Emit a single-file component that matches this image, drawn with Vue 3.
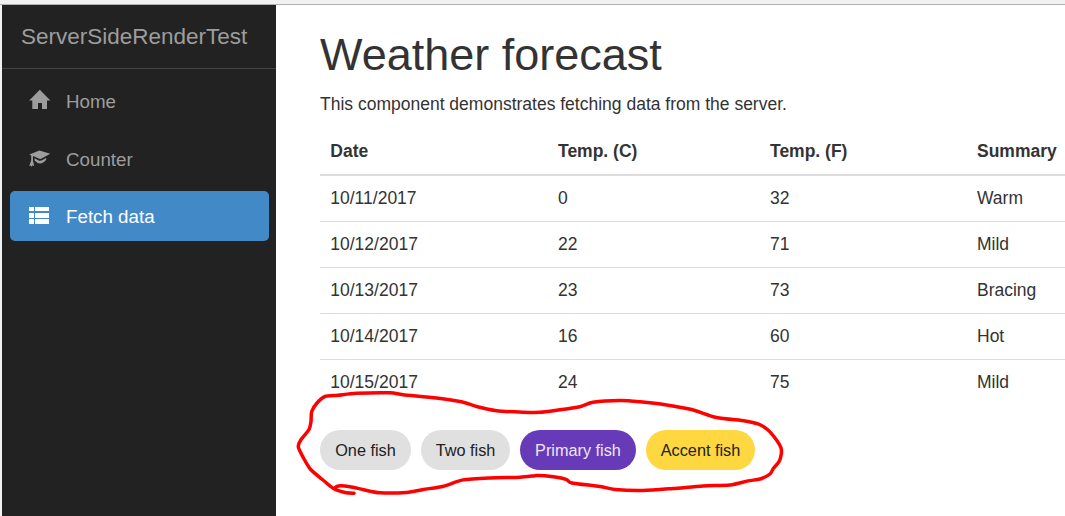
<script setup>
const nav = [
  { label: 'Home', icon: 'home', active: false },
  { label: 'Counter', icon: 'education', active: false },
  { label: 'Fetch data', icon: 'list', active: true },
]

const forecasts = [
  { date: '10/11/2017', c: 0, f: 32, summary: 'Warm' },
  { date: '10/12/2017', c: 22, f: 71, summary: 'Mild' },
  { date: '10/13/2017', c: 23, f: 73, summary: 'Bracing' },
  { date: '10/14/2017', c: 16, f: 60, summary: 'Hot' },
  { date: '10/15/2017', c: 24, f: 75, summary: 'Mild' },
]

const chips = [
  { label: 'One fish', kind: 'plain one' },
  { label: 'Two fish', kind: 'plain two' },
  { label: 'Primary fish', kind: 'primary' },
  { label: 'Accent fish', kind: 'accent' },
]

// Freehand marker stroke, smoothed into cubic segments.
const points = [
  [354, 493.2], [345, 492.5], [333.5, 488.5], [323, 480], [310.7, 469.5], [303.5, 458], [298.3, 446.7],
  [300.8, 440], [309, 429.5], [311, 421.5], [311.7, 411.5], [317, 403], [325, 396.5], [338, 395.3],
  [356.5, 393.3], [390, 392.8], [403, 394.7], [436.5, 398], [461.5, 401.8], [476.5, 406.5],
  [496.5, 410.7], [523, 412.2], [540, 412.3], [556.5, 410.3], [580, 406.7], [593, 402.3], [620, 400.5],
  [640, 401.8], [666.5, 404.9], [691.5, 409.5], [716.5, 417.5], [745, 420.9], [758, 423.9], [768, 430],
  [776.5, 440], [780.9, 447.5], [781.3, 454], [779, 461.7], [773.3, 468.5], [770, 474], [760, 479],
  [748, 480.9], [730, 485], [703, 485.9], [673, 488.5], [643, 490.5], [615, 489.5], [600, 486.5],
  [571.7, 483], [566.7, 479.6], [556.7, 477.2], [540, 475.5], [535, 475.7], [520, 477.2], [490, 477.9],
  [463, 479.9], [443.5, 486.2], [423.3, 489.5], [406.7, 492.4], [380, 492.8], [363.5, 489.7],
  [350, 486.7], [338.5, 485.9], [334.7, 488],
]

function smooth(p) {
  let d = `M${p[0][0]} ${p[0][1]}`
  for (let i = 0; i < p.length - 1; i++) {
    const a = p[Math.max(i - 1, 0)]
    const b = p[i]
    const c = p[i + 1]
    const e = p[Math.min(i + 2, p.length - 1)]
    const k = 8
    d += `C${b[0] + (c[0] - a[0]) / k} ${b[1] + (c[1] - a[1]) / k} ${c[0] - (e[0] - b[0]) / k} ${c[1] - (e[1] - b[1]) / k} ${c[0]} ${c[1]}`
  }
  return d
}

const marker = smooth(points)
</script>

<template>
  <div class="page">
    <aside class="sidebar">
      <div class="brand">ServerSideRenderTest</div>
      <nav class="menu">
        <a v-for="item in nav" :key="item.label" class="item" :class="{ active: item.active }">
          <svg class="icon" width="22" height="20" viewBox="0 0 22 20" fill="currentColor">
            <path v-if="item.icon === 'home'" d="M10.8 -0.2 L21.4 10.5 H18 V19 H13 V13 H9 V19 H3.3 V10.5 H0.2 Z" />
            <g v-else-if="item.icon === 'education'">
              <path d="M0.3 6.4 L10.4 2.6 L21.3 5.8 L12.6 10.6 Q11.2 11.2 9.6 10.5 L4 8 L3.9 12.6 L5.2 18.2 L3.6 17.2 L2.4 18.8 L1.6 17.6 L0.2 18 L2.2 12.6 V7.4 Z" />
              <path d="M5.6 10.2 L9.6 12.4 Q11.3 13.2 13 12.3 L17.2 9.9 V11.8 Q14 15.6 11.2 15.6 Q8.6 15.6 5.6 12.4 Z" />
            </g>
            <path v-else d="M0 2h5v4h-5z M6 2h14v4h-14z M0 8h5v5h-5z M6 8h14v5h-14z M0 14h5v5h-5z M6 14h14v5h-14z" />
          </svg>
          <span>{{ item.label }}</span>
        </a>
      </nav>
    </aside>
    <main class="content">
      <h1>Weather forecast</h1>
      <p>This component demonstrates fetching data from the server.</p>
      <table>
        <thead>
          <tr><th class="date">Date</th><th class="c">Temp. (C)</th><th class="f">Temp. (F)</th><th>Summary</th></tr>
        </thead>
        <tbody>
          <tr v-for="row in forecasts" :key="row.date">
            <td>{{ row.date }}</td><td>{{ row.c }}</td><td>{{ row.f }}</td><td>{{ row.summary }}</td>
          </tr>
        </tbody>
      </table>
      <div class="chips">
        <span v-for="chip in chips" :key="chip.label" class="chip" :class="chip.kind">{{ chip.label }}</span>
      </div>
    </main>
    <svg class="marker" width="1065" height="516" viewBox="0 0 1065 516">
      <path :d="marker" />
    </svg>
  </div>
</template>

<style scoped>
.page {
  position: relative;
  box-sizing: border-box;
  display: flex;
  width: 1065px;
  height: 516px;
  border-top: 4px solid #f1f1f1;
  overflow: hidden;
  background: #fff;
  color: #333;
  font-family: "Liberation Sans", Arial, sans-serif;
  box-shadow: inset 0 1px #b0b0b0;
}
.sidebar {
  width: 274px;
  flex: none;
  margin-top: 1px;
  border-left: 2px solid #f1f1f1;
  background: #222;
  color: #9d9d9d;
}
.brand {
  height: 63px;
  padding-left: 19px;
  border-bottom: 1px solid #444;
  font-size: 22.5px;
  line-height: 64px;
}
.menu {
  display: flex;
  flex-direction: column;
  gap: 7.5px;
  padding: 7px 7px 0 8px;
}
.item {
  box-sizing: border-box;
  display: flex;
  align-items: center;
  height: 50px;
  padding: 2px 0 0 19px;
  border-radius: 5px;
  font-size: 18.75px;
}
.item.active {
  background: #4289c7;
  color: #fff;
}
.icon {
  flex: none;
  overflow: visible;
  margin: -4px 15px 0 0;
}
.content {
  flex: none;
  width: 745px;
  padding: 23px 0 0 44px;
}
h1 {
  margin: 0;
  font-size: 45px;
  font-weight: 500;
  line-height: 56px;
}
p {
  margin: 9px 0 11px;
  font-size: 17.5px;
  line-height: 25px;
}
table {
  width: 780px;
  border-collapse: separate;
  border-spacing: 0;
  table-layout: fixed;
  font-size: 17.5px;
}
th,
td {
  box-sizing: border-box;
  height: 46px;
  padding: 0 10px;
  border-bottom: 1px solid #ddd;
  text-align: left;
}
td:first-child,
th:first-child {
  padding-left: 10.3px;
}
th {
  height: 48px;
  border-bottom-width: 2px;
}
.date {
  width: 228px;
}
.c {
  width: 212px;
}
.f {
  width: 207px;
}
tbody tr:last-child td {
  border-bottom-color: transparent;
}
.chips {
  display: flex;
  gap: 10px;
  margin-top: 24px;
}
.chip {
  height: 40px;
  border-radius: 20px;
  font-size: 16.25px;
  line-height: 40px;
  text-align: center;
  white-space: nowrap;
}
.plain {
  background: #e0e0e0;
  color: #212121;
}
.one {
  width: 91px;
}
.two {
  width: 89px;
}
.primary {
  width: 116px;
  background: #673ab7;
  color: #ede7f6;
}
.accent {
  width: 109px;
  background: #ffd740;
  color: #212121;
}
.marker {
  position: absolute;
  top: -4px;
  left: 0;
  pointer-events: none;
}
.marker path {
  fill: none;
  stroke: #f00;
  stroke-width: 3.5;
  stroke-linecap: round;
  stroke-linejoin: round;
}
</style>

<style>
body {
  margin: 0;
  overflow: hidden;
}
</style>
